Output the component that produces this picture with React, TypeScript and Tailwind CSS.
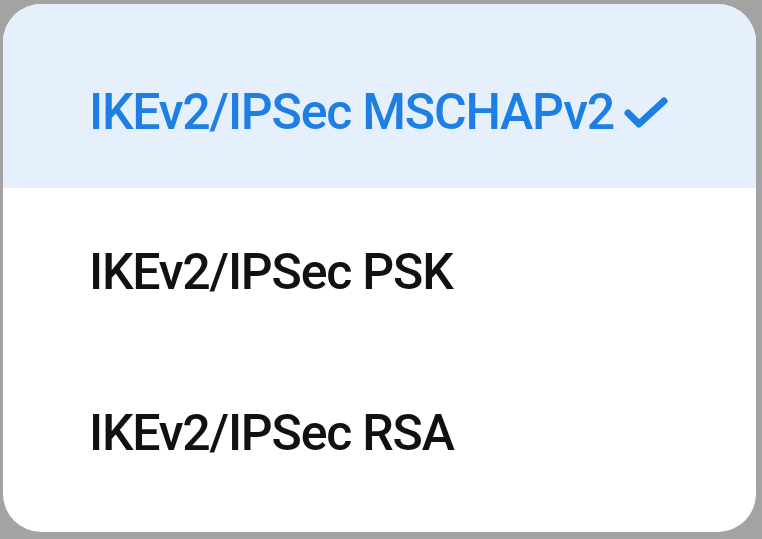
export default function App() {
  const options = [
    { label: "IKEv2/IPSec MSCHAPv2", selected: true },
    { label: "IKEv2/IPSec PSK", selected: false },
    { label: "IKEv2/IPSec RSA", selected: false },
  ];

  return (
    <div className="w-[762px] h-[539px] bg-[#a3a3a3] pt-[4px] pl-[3px] overflow-hidden" style={{ fontFamily: "Roboto, 'Noto Sans', sans-serif" }}>
      <div className="w-[753px] h-[528px] bg-white rounded-[38px] overflow-hidden flex flex-col">
        {options.map((opt, i) => (
          <div
            key={opt.label}
            className={`flex items-center pl-[86px] ${
              i === 0 ? "h-[184px] pt-[32px] bg-[#e6f0fd]" : i === 1 ? "h-[168px]" : "h-[154px]"
            }`}
          >
            <span
              className={`text-[50px] font-medium leading-none tracking-[-1.2px] ${
                opt.selected ? "text-[#1d7fe3]" : "text-[#111111]"
              }`}
            >
              {opt.label}
            </span>
            {opt.selected && (
              <svg width="44" height="32" viewBox="0 0 44 32" className="ml-[10px] mt-[2px]">
                <path
                  d="M4 16 L15 27 L40 4"
                  fill="none"
                  stroke="#1d7fe3"
                  strokeWidth="7"
                  strokeLinecap="round"
                  strokeLinejoin="round"
                />
              </svg>
            )}
          </div>
        ))}
      </div>
    </div>
  );
}
